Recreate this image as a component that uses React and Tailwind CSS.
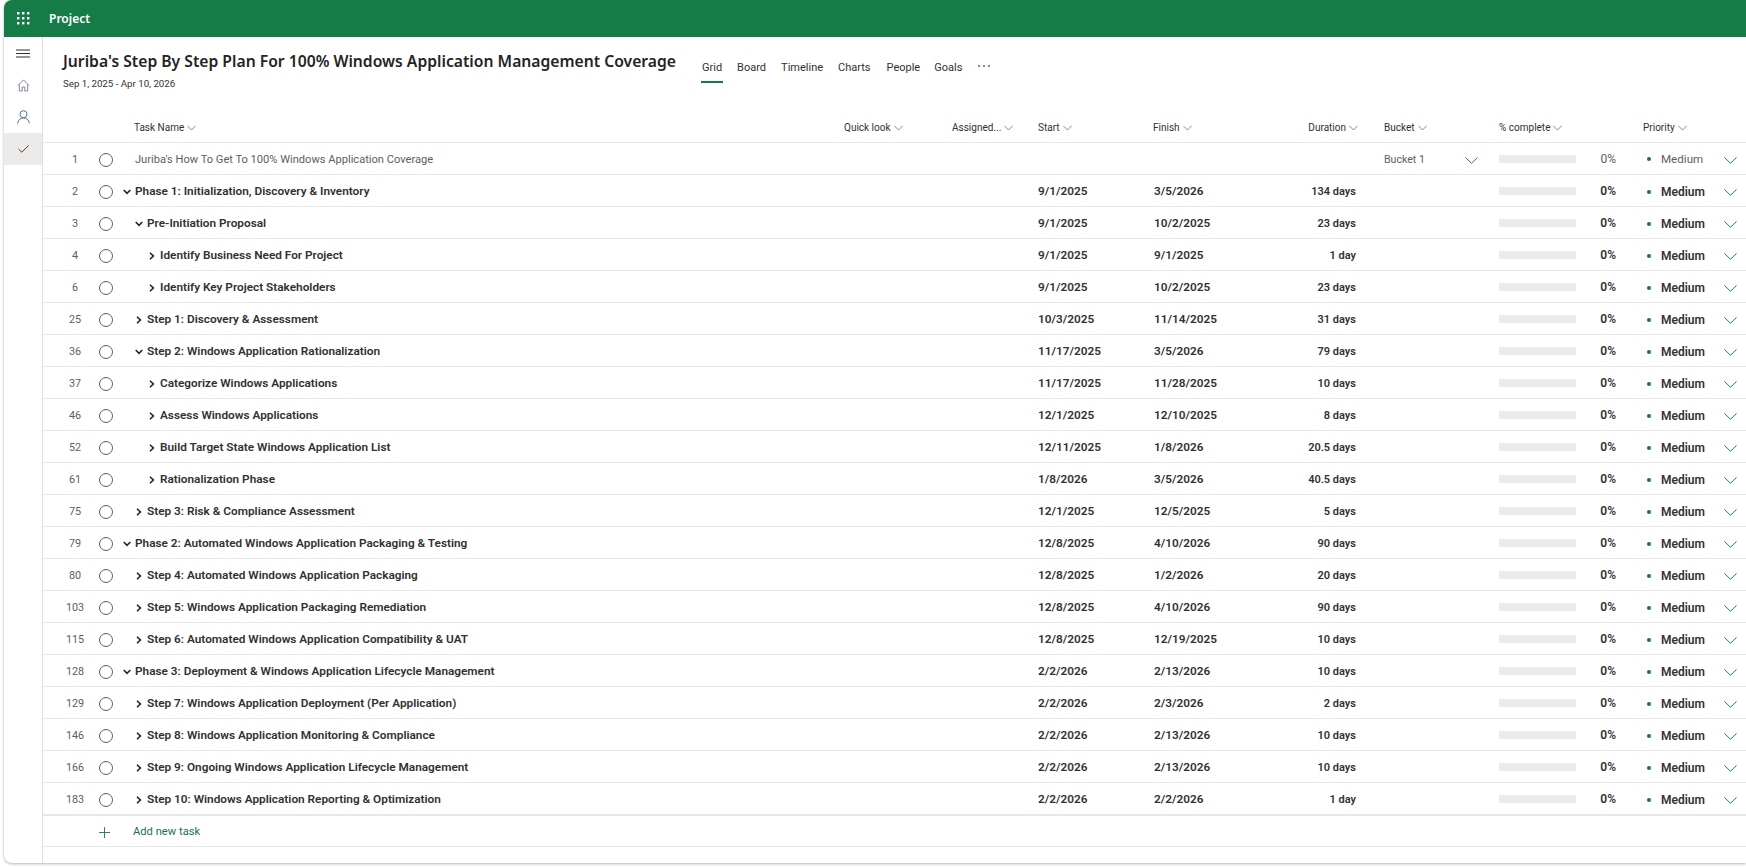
const FONT = "font-['Roboto',sans-serif]";

const rows = [
  { n: 1, t: "Juriba's How To Get To 100% Windows Application Coverage", lvl: 0, leaf: true, bucket: "Bucket 1" },
  { n: 2, t: "Phase 1: Initialization, Discovery & Inventory", lvl: 0, open: true, s: "9/1/2025", f: "3/5/2026", d: "134 days" },
  { n: 3, t: "Pre-Initiation Proposal", lvl: 1, open: true, s: "9/1/2025", f: "10/2/2025", d: "23 days" },
  { n: 4, t: "Identify Business Need For Project", lvl: 2, s: "9/1/2025", f: "9/1/2025", d: "1 day" },
  { n: 6, t: "Identify Key Project Stakeholders", lvl: 2, s: "9/1/2025", f: "10/2/2025", d: "23 days" },
  { n: 25, t: "Step 1: Discovery & Assessment", lvl: 1, s: "10/3/2025", f: "11/14/2025", d: "31 days" },
  { n: 36, t: "Step 2: Windows Application Rationalization", lvl: 1, open: true, s: "11/17/2025", f: "3/5/2026", d: "79 days" },
  { n: 37, t: "Categorize Windows Applications", lvl: 2, s: "11/17/2025", f: "11/28/2025", d: "10 days" },
  { n: 46, t: "Assess Windows Applications", lvl: 2, s: "12/1/2025", f: "12/10/2025", d: "8 days" },
  { n: 52, t: "Build Target State Windows Application List", lvl: 2, s: "12/11/2025", f: "1/8/2026", d: "20.5 days" },
  { n: 61, t: "Rationalization Phase", lvl: 2, s: "1/8/2026", f: "3/5/2026", d: "40.5 days" },
  { n: 75, t: "Step 3: Risk & Compliance Assessment", lvl: 1, s: "12/1/2025", f: "12/5/2025", d: "5 days" },
  { n: 79, t: "Phase 2: Automated Windows Application Packaging & Testing", lvl: 0, open: true, s: "12/8/2025", f: "4/10/2026", d: "90 days" },
  { n: 80, t: "Step 4: Automated Windows Application Packaging", lvl: 1, s: "12/8/2025", f: "1/2/2026", d: "20 days" },
  { n: 103, t: "Step 5: Windows Application Packaging Remediation", lvl: 1, s: "12/8/2025", f: "4/10/2026", d: "90 days" },
  { n: 115, t: "Step 6: Automated Windows Application Compatibility & UAT", lvl: 1, s: "12/8/2025", f: "12/19/2025", d: "10 days" },
  { n: 128, t: "Phase 3: Deployment & Windows Application Lifecycle Management", lvl: 0, open: true, s: "2/2/2026", f: "2/13/2026", d: "10 days" },
  { n: 129, t: "Step 7: Windows Application Deployment (Per Application)", lvl: 1, s: "2/2/2026", f: "2/3/2026", d: "2 days" },
  { n: 146, t: "Step 8: Windows Application Monitoring & Compliance", lvl: 1, s: "2/2/2026", f: "2/13/2026", d: "10 days" },
  { n: 166, t: "Step 9: Ongoing Windows Application Lifecycle Management", lvl: 1, s: "2/2/2026", f: "2/13/2026", d: "10 days" },
  { n: 183, t: "Step 10: Windows Application Reporting & Optimization", lvl: 1, s: "2/2/2026", f: "2/2/2026", d: "1 day" },
];

const COLS = "grid grid-cols-[17px_30px_32px_722px_108px_86px_115px_115px_92px_139px_144px_103px]";

function HeadChevron() {
  return (
    <svg width="9" height="6" viewBox="0 0 9 6" className="ml-[3px] mt-[2px] shrink-0" fill="none" stroke="#7a7876" strokeWidth="0.9">
      <path d="M0.3 0.8 L4.5 5 L8.7 0.8" />
    </svg>
  );
}

function GreenChevron() {
  return (
    <svg width="13" height="7" viewBox="0 0 13 7" className="shrink-0" fill="none" stroke="#1f8a52" strokeWidth="1">
      <path d="M0.5 0.5 L6.5 6.3 L12.5 0.5" />
    </svg>
  );
}

function TreeChevron({ open }) {
  return open ? (
    <svg width="8" height="6" viewBox="0 0 8 6" fill="none" stroke="#252423" strokeWidth="1.6" className="shrink-0">
      <path d="M0.7 1 L4 4.4 L7.3 1" />
    </svg>
  ) : (
    <svg width="6" height="8" viewBox="0 0 6 8" fill="none" stroke="#252423" strokeWidth="1.6" className="shrink-0 mx-[1px]">
      <path d="M1 0.7 L4.4 4 L1 7.3" />
    </svg>
  );
}

function HeadCell({ children, className = "" }) {
  return (
    <div className={"flex items-center text-[10px] text-[#323130] " + className}>
      <span>{children}</span>
      <HeadChevron />
    </div>
  );
}

function Row({ r }) {
  const nameCls = r.leaf ? "mt-[2px] text-[11.1px]" : "text-[11.8px]";
  const textCls = r.leaf ? "font-normal text-[#605e5c]" : "font-semibold text-[#323130]";
  const indent = ["pl-0", "pl-[13px]", "pl-[26px]"][r.lvl];
  return (
    <div className={COLS + " h-[32px] items-center border-b border-[#e8e8e8] pt-[2px] " + textCls}>
      <div />
      <div className="mt-[2px] text-center text-[10.8px] font-normal text-[#605e5c]">{r.n}</div>
      <div className="flex justify-center">
        <span className="block h-[14px] w-[14px] rounded-full border border-[#605e5c]" />
      </div>
      <div className={"flex items-center whitespace-nowrap pl-[1px] " + nameCls + " " + indent}>
        <span className="flex w-[12px] shrink-0 items-center">{r.leaf ? null : <TreeChevron open={r.open} />}</span>
        <span>{r.t}</span>
      </div>
      <div />
      <div />
      <div className="text-[11.8px]">{r.s}</div>
      <div className="pl-[1px] text-[11.8px]">{r.f}</div>
      <div className="mt-[2px] pr-[4px] text-right text-[11px]">{r.d}</div>
      <div className="flex items-center pl-[24px] text-[10.6px]">
        {r.bucket ? (
          <>
            <span className="w-[81px]">{r.bucket}</span>
            <span className="mt-[2px]"><GreenChevron /></span>
          </>
        ) : null}
      </div>
      <div className="flex items-center">
        <span className="-mt-[2px] block h-[8px] w-[77px] bg-[#edebe9]" />
        <span className="ml-[24px] -mt-[1px] w-[16px] text-right text-[12px]">0%</span>
      </div>
      <div className={"flex items-center " + (r.leaf ? "text-[11.6px]" : "text-[12px]")}>
        <span className="ml-[4px] block h-[4px] w-[4px] rounded-full bg-[#217346]" />
        <span className="ml-[10px] w-[63px]">Medium</span>
        <span className="mt-[2px]"><GreenChevron /></span>
      </div>
    </div>
  );
}

function Tab({ children, active, className = "" }) {
  return (
    <div className={"relative flex h-[30px] items-center text-[11px] text-[#323130] " + className}>
      {children}
      {active ? <span className="absolute bottom-0 left-[-1px] right-[-1px] h-[2px] bg-[#107c41]" /> : null}
    </div>
  );
}

export default function App() {
  return (
    <div className={"h-[867px] w-[1746px] overflow-hidden bg-white pl-[4px] pb-[4px] " + FONT}>
      <div className="flex h-full flex-col overflow-hidden rounded-l-[8px] bg-white shadow-[0_1px_3px_rgba(0,0,0,0.3)]">
        <header className="flex h-[37px] shrink-0 items-center bg-[#167c47] text-white">
          <svg width="13" height="13" viewBox="0 0 13 13" className="ml-[13px]" fill="#fff">
            {[0, 5, 10].flatMap((y) =>
              [0, 5, 10].map((x) => <rect key={x + "-" + y} x={x} y={y} width="2.4" height="2.4" />)
            )}
          </svg>
          <span className="ml-[19px] mt-[1px] font-['Noto_Sans',sans-serif] text-[12px] font-semibold">Project</span>
        </header>

        <div className="flex min-h-0 flex-1">
          <nav className="flex w-[39px] shrink-0 flex-col border-r border-[#e1dfdd]">
            <div className="flex h-[32px] items-center justify-center">
              <svg width="14" height="9" viewBox="0 0 14 9" fill="none" stroke="#323130" strokeWidth="1">
                <path d="M0 1 H14 M0 4.5 H14 M0 8 H14" />
              </svg>
            </div>
            <div className="flex h-[32px] items-center justify-center">
              <svg width="13" height="13" viewBox="0 0 13 13" fill="none" stroke="#6f7e8c" strokeWidth="0.9">
                <path d="M0.8 6.6 L6.5 0.9 L12.2 6.6 M2.3 5.4 V12 H5.2 V8 H7.8 V12 H10.7 V5.4" />
              </svg>
            </div>
            <div className="flex h-[32px] items-center justify-center">
              <svg width="13" height="14" viewBox="0 0 13 14" fill="none" stroke="#4d7490" strokeWidth="1">
                <circle cx="6.5" cy="4.2" r="3.5" />
                <path d="M0.7 13.5 C0.9 10 3.2 8 6.5 8 C9.8 8 12.1 10 12.3 13.5" />
              </svg>
            </div>
            <div className="flex h-[32px] items-center justify-center bg-[#edebe9]">
              <svg width="11" height="8" viewBox="0 0 11 8" fill="none" stroke="#323130" strokeWidth="0.9">
                <path d="M0.5 4 L3.8 7.2 L10.5 0.6" />
              </svg>
            </div>
          </nav>

          <main className="min-w-0 flex-1">
            <div className="flex h-[47px] items-start">
              <div className="ml-[20px] mt-[13px] w-[639px] shrink-0">
                <h1 className="whitespace-nowrap font-['Noto_Sans',sans-serif] text-[15.7px] leading-[22px] font-semibold text-[#252423]">
                  Juriba's Step By Step Plan For 100% Windows Application Management Coverage
                </h1>
                <div className="mt-[6px] text-[9.7px] leading-[12px] text-[#323130]">Sep 1, 2025 - Apr 10, 2026</div>
              </div>
              <div className="mt-[16px] flex items-center">
                <Tab active>Grid</Tab>
                <Tab className="ml-[15px]">Board</Tab>
                <Tab className="ml-[15px]">Timeline</Tab>
                <Tab className="ml-[15px]">Charts</Tab>
                <Tab className="ml-[16px]">People</Tab>
                <Tab className="ml-[14px]">Goals</Tab>
                <div className="ml-[16px] -mt-[5px] flex gap-[3px]">
                  <span className="h-[2px] w-[2px] rounded-full bg-[#605e5c]" />
                  <span className="h-[2px] w-[2px] rounded-full bg-[#605e5c]" />
                  <span className="h-[2px] w-[2px] rounded-full bg-[#605e5c]" />
                </div>
              </div>
            </div>

            <div className={COLS + " mt-[12px] h-[47px] items-center border-b border-[#e8e8e8] pt-[16px]"}>
              <div />
              <div />
              <div />
              <HeadCell className="pl-[12px]">Task Name</HeadCell>
              <HeadCell>Quick look</HeadCell>
              <HeadCell>Assigned...</HeadCell>
              <HeadCell>Start</HeadCell>
              <HeadCell>Finish</HeadCell>
              <HeadCell className="justify-end pr-[2px]">Duration</HeadCell>
              <HeadCell className="pl-[24px]">Bucket</HeadCell>
              <HeadCell>% complete</HeadCell>
              <HeadCell>Priority</HeadCell>
            </div>

            {rows.map((r) => (
              <Row key={r.n} r={r} />
            ))}

            <div className="flex h-[32px] items-center border-t border-b border-[#e8e8e8] pt-[2px] text-[11.2px] text-[#217346]">
              <svg width="11" height="11" viewBox="0 0 11 11" className="ml-[56px]" fill="none" stroke="#217346" strokeWidth="0.9">
                <path d="M5.5 0 V11 M0 5.5 H11" />
              </svg>
              <span className="ml-[23px]">Add new task</span>
            </div>
          </main>
        </div>
      </div>
    </div>
  );
}
